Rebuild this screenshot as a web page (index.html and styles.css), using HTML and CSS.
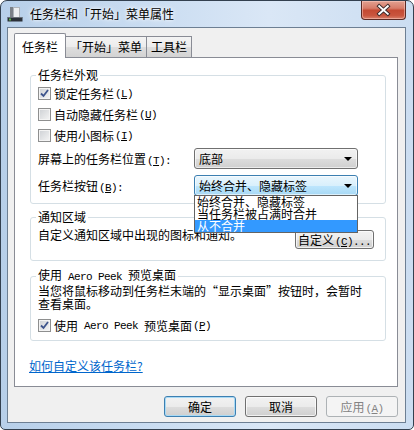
FILE: index.html
```html
<!DOCTYPE html>
<html lang="zh-CN">
<head>
    <meta charset="UTF-8">
    <meta name="viewport" content="width=device-width, initial-scale=1.0">
    <title>任务栏和「开始」菜单属性</title>
    <link rel="stylesheet" href="styles.css">
</head>
<body>
    <div class="window">
        <div class="titlebar">
            <svg class="app-icon" width="16" height="16" viewBox="0 0 16 16">
                <rect x="3" y="1" width="3" height="11" fill="#7b8087"/>
                <rect x="6.5" y="1.5" width="6" height="10" fill="#eceef0" stroke="#aeb3b9"/>
                <rect x="0.5" y="11" width="15" height="4.5" fill="#2b3038"/>
                <rect x="1" y="11" width="14" height="1" fill="#6a7078"/>
                <rect x="2" y="12.5" width="2" height="2" fill="#5bb04a"/>
            </svg>
            <span class="title">任务栏和「开始」菜单属性</span>
            <div class="close-btn">
                <svg width="45" height="19" viewBox="0 0 45 19">
                    <path d="M18 5 L27 13 M27 5 L18 13" stroke="#3a2a2a" stroke-width="4" stroke-linecap="square" fill="none"/>
                    <path d="M18 5 L27 13 M27 5 L18 13" stroke="#ffffff" stroke-width="2" stroke-linecap="square" fill="none"/>
                </svg>
            </div>
        </div>

        <div class="client">
            <div class="tabs">
                <div class="tab active">任务栏</div>
                <div class="tab">「开始」菜单</div>
                <div class="tab">工具栏</div>
            </div>

            <div class="panel">
                <fieldset class="group group-look">
                    <legend>任务栏外观</legend>
                    <div class="check-row">
                        <span class="checkbox checked">
                            <svg width="11" height="11" viewBox="0 0 11 11"><path d="M2 5.5 L4.5 8 L9 2" stroke="#3d548c" stroke-width="1.8" fill="none"/></svg>
                        </span>
                        锁定任务栏<span class="key">(<u>L</u>)</span>
                    </div>
                    <div class="check-row">
                        <span class="checkbox"></span>
                        自动隐藏任务栏<span class="key">(<u>U</u>)</span>
                    </div>
                    <div class="check-row">
                        <span class="checkbox"></span>
                        使用小图标<span class="key">(<u>I</u>)</span>
                    </div>
                    <div class="field-row first">
                        <span class="field-label">屏幕上的任务栏位置<span class="key">(<u>T</u>):</span></span>
                        <div class="combo">底部<span class="arrow"></span></div>
                    </div>
                    <div class="field-row">
                        <span class="field-label">任务栏按钮<span class="key">(<u>B</u>):</span></span>
                        <div class="combo focused">始终合并、隐藏标签<span class="arrow"></span>
                            <ul class="dropdown">
                                <li>始终合并、隐藏标签</li>
                                <li>当任务栏被占满时合并</li>
                                <li class="selected">从不合并</li>
                            </ul>
                        </div>
                    </div>
                </fieldset>

                <fieldset class="group group-notify">
                    <legend>通知区域</legend>
                    <div class="notify-row">
                        <span>自定义通知区域中出现的图标和通知。</span>
                        <button class="btn btn-small">自定义<span class="key">(<u>C</u>)...</span></button>
                    </div>
                </fieldset>

                <fieldset class="group group-peek">
                    <legend>使用<span class="latin"> Aero Peek </span>预览桌面</legend>
                    <p class="peek-text">当您将鼠标移动到任务栏末端的“显示桌面”按钮时，会暂时<br>查看桌面。</p>
                    <div class="check-row">
                        <span class="checkbox checked">
                            <svg width="11" height="11" viewBox="0 0 11 11"><path d="M2 5.5 L4.5 8 L9 2" stroke="#3d548c" stroke-width="1.8" fill="none"/></svg>
                        </span>
                        使用<span class="latin"> Aero Peek </span>预览桌面<span class="key">(<u>P</u>)</span>
                    </div>
                </fieldset>

                <a class="help-link" href="#">如何自定义该任务栏?</a>
            </div>

            <div class="dialog-buttons">
                <button class="btn btn-default">确定</button>
                <button class="btn">取消</button>
                <button class="btn" disabled>应用<span class="key">(<u>A</u>)</span></button>
            </div>
        </div>
    </div>
</body>
</html>
```

FILE: styles.css
```css
* {
    margin: 0;
    padding: 0;
    box-sizing: border-box;
}

body {
    width: 414px;
    height: 430px;
    overflow: hidden;
    background: #ffffff;
    font-family: "Noto Sans CJK SC", "Noto Sans", sans-serif;
    font-size: 12px;
    color: #000;
}

/* 窗口外框 */
.window {
    width: 414px;
    height: 430px;
    border: 1px solid #33404f;
    border-radius: 7px 7px 5px 5px;
    background: linear-gradient(to right, #b7cfe9 0%, #c9dcf1 35%, #dae7f6 65%, #cbddf1 100%);
    padding: 0 7px 6px 6px;
    display: flex;
    flex-direction: column;
}

.titlebar {
    height: 26px;
    display: flex;
    align-items: center;
}

.app-icon {
    flex: none;
}

.title {
    margin-left: 7px;
    line-height: 16px;
    text-shadow: 0 0 6px #ffffff, 0 0 3px #ffffff;
}

.close-btn {
    margin-left: auto;
    align-self: flex-start;
    width: 45px;
    height: 19px;
    border: 1px solid #5b2a24;
    border-top: none;
    border-radius: 0 0 4px 4px;
    background: linear-gradient(#e2a191 0%, #d77c69 40%, #c44a33 52%, #c9553e 80%, #d9806b 100%);
    box-shadow: inset 0 0 0 1px rgba(255, 210, 200, 0.5);
    display: flex;
}

/* 客户区 */
.client {
    flex: 1;
    background: #f0f0f0;
    border: 1px solid #6d7f93;
    padding: 5px 7px 0 6px;
    display: flex;
    flex-direction: column;
}

.tabs {
    display: flex;
    align-items: flex-end;
    height: 25px;
    margin-bottom: -1px;
    position: relative;
    z-index: 1;
}

.tab {
    height: 21px;
    margin-bottom: 1px;
    margin-left: -1px;
    padding: 0 4px;
    border: 1px solid #898c95;
    border-bottom: none;
    background: linear-gradient(#f4f4f4, #ececec 50%, #dedede 51%, #d3d3d3);
    line-height: 20px;
    white-space: nowrap;
}

.tab.active {
    height: 25px;
    margin-left: 0;
    margin-bottom: 0;
    padding: 6px 7px 0;
    line-height: 14px;
    background: #ffffff;
    border-radius: 2px 2px 0 0;
}

.panel {
    height: 330px;
    background: #ffffff;
    border: 1px solid #898c95;
    padding: 10px 11px 0 15px;
}

/* 分组框 */
.group {
    border: 1px solid #d5dfe5;
    border-radius: 3px;
    padding: 1px 11px 7px 7px;
    min-width: 0;
}

.group legend {
    margin-left: -2px;
    padding: 0 2px;
    line-height: 14px;
}

.check-row {
    height: 21px;
    display: flex;
    align-items: center;
    white-space: nowrap;
}

.checkbox {
    width: 13px;
    height: 13px;
    margin-right: 3px;
    border: 1px solid #8e8f8f;
    background: linear-gradient(135deg, #cdd0d4, #f5f5f5);
    box-shadow: inset 0 0 0 1px #f4f4f4;
    display: flex;
    align-items: center;
    justify-content: center;
    flex: none;
}

.key {
    font-family: "Liberation Mono", monospace;
    font-size: 11px;
    letter-spacing: -0.6px;
    margin-left: 1px;
}

.latin {
    font-family: "Liberation Mono", monospace;
    font-size: 11px;
    letter-spacing: -0.6px;
    white-space: pre;
}

.field-row {
    display: flex;
    align-items: center;
    margin-top: 6px;
}

.field-row.first {
    margin-top: 2px;
}

.field-label {
    width: 156px;
    white-space: nowrap;
}

.combo {
    width: 164px;
    height: 21px;
    border: 1px solid #707070;
    border-radius: 3px;
    background: linear-gradient(#f2f2f2, #ebebeb 50%, #dddddd 51%, #cfcfcf);
    box-shadow: inset 0 0 0 1px rgba(255, 255, 255, 0.6);
    padding-left: 4px;
    display: flex;
    align-items: center;
    position: relative;
    white-space: nowrap;
}

.combo.focused {
    border-color: #3c7fb1;
    background: linear-gradient(#eaf6fd, #d9f0fc 50%, #bee6fd 51%, #a7d9f5);
}

.arrow {
    margin-left: auto;
    margin-right: 5px;
    width: 0;
    height: 0;
    border-left: 4px solid transparent;
    border-right: 4px solid transparent;
    border-top: 4px solid #000;
}

.dropdown {
    position: absolute;
    top: 100%;
    left: -1px;
    right: -1px;
    z-index: 2;
    list-style: none;
    background: #ffffff;
    border: 1px solid #646464;
}

.dropdown li {
    height: 12px;
    line-height: 12px;
    padding-left: 2px;
}

.dropdown li.selected {
    background: #3399ff;
    color: #ffffff;
}

.group-notify {
    margin-top: 6px;
    padding: 4px 11px 11px 7px;
}

.notify-row {
    display: flex;
    justify-content: space-between;
    align-items: flex-start;
    line-height: 14px;
}

.group-peek {
    margin-top: 7px;
    padding: 0 11px 4px 7px;
}

.peek-text {
    line-height: 13px;
}

.group-peek .check-row {
    margin-top: 5px;
}

.help-link {
    display: inline-block;
    margin-top: 18px;
    margin-left: -1px;
    line-height: 14px;
    color: #0066cc;
    text-decoration: underline;
}

/* 按钮 */
.btn {
    width: 72px;
    height: 21px;
    border: 1px solid #707070;
    border-radius: 3px;
    background: linear-gradient(#f2f2f2, #ebebeb 50%, #dddddd 51%, #cfcfcf);
    box-shadow: inset 0 0 0 1px rgba(255, 255, 255, 0.7);
    font-family: inherit;
    font-size: 12px;
    color: #000;
    line-height: 19px;
}

.btn-small {
    width: 79px;
    height: 19px;
    margin-top: 2px;
    line-height: 17px;
}

.btn-default {
    border-color: #3c7fb1;
    box-shadow: inset 0 0 0 1px #a9daf5;
}

.btn:disabled {
    border-color: #adb2b5;
    background: #f4f4f4;
    box-shadow: none;
    color: #838383;
}

.dialog-buttons {
    display: flex;
    justify-content: flex-end;
    gap: 9px;
    margin-top: 9px;
}
```
